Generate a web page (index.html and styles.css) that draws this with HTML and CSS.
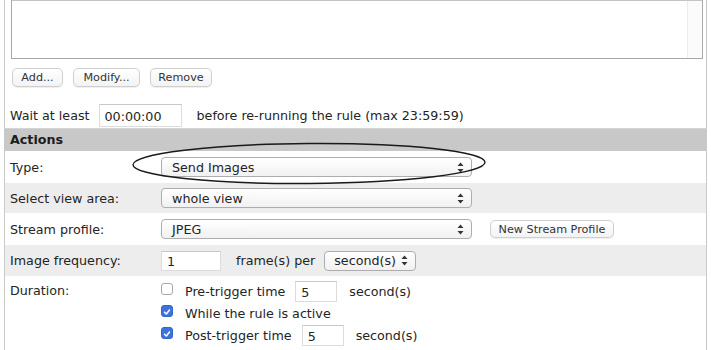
FILE: index.html
```html
<!DOCTYPE html>
<html lang="en">
<head>
    <meta charset="UTF-8">
    <meta name="viewport" content="width=device-width, initial-scale=1.0">
    <title>Action Rule</title>
    <link rel="stylesheet" href="styles.css">
</head>
<body>
    <div class="page">
        <div class="conditions">
            <div class="listbox"><div class="scroll"></div></div>
            <div class="list-buttons">
                <button class="btn btn-add">Add...</button>
                <button class="btn btn-modify">Modify...</button>
                <button class="btn btn-remove">Remove</button>
            </div>
            <div class="wait">
                <span>Wait at least</span>
                <input type="text" class="field field-time" value="00:00:00">
                <span>before re-running the rule (max 23:59:59)</span>
            </div>
        </div>

        <div class="section-head">Actions</div>

        <div class="row row-type">
            <div class="label">Type:</div>
            <div class="control">
                <div class="select select-wide"><span>Send Images</span><svg class="arrows" width="7" height="11" viewBox="0 0 7 11"><path d="M3.5 0.5 L6.5 4 L0.5 4 Z M3.5 10.5 L6.5 7 L0.5 7 Z" fill="#333"/></svg></div>
            </div>
        </div>
        <div class="row row-alt row-area">
            <div class="label">Select view area:</div>
            <div class="control">
                <div class="select select-wide"><span>whole view</span><svg class="arrows" width="7" height="11" viewBox="0 0 7 11"><path d="M3.5 0.5 L6.5 4 L0.5 4 Z M3.5 10.5 L6.5 7 L0.5 7 Z" fill="#333"/></svg></div>
            </div>
        </div>
        <div class="row row-stream">
            <div class="label">Stream profile:</div>
            <div class="control">
                <div class="select select-wide"><span>JPEG</span><svg class="arrows" width="7" height="11" viewBox="0 0 7 11"><path d="M3.5 0.5 L6.5 4 L0.5 4 Z M3.5 10.5 L6.5 7 L0.5 7 Z" fill="#333"/></svg></div>
                <button class="btn btn-new">New Stream Profile</button>
            </div>
        </div>
        <div class="row row-alt row-freq">
            <div class="label">Image frequency:</div>
            <div class="control">
                <input type="text" class="field field-freq" value="1">
                <span class="per">frame(s) per</span>
                <div class="select select-unit"><span>second(s)</span><svg class="arrows" width="7" height="11" viewBox="0 0 7 11"><path d="M3.5 0.5 L6.5 4 L0.5 4 Z M3.5 10.5 L6.5 7 L0.5 7 Z" fill="#333"/></svg></div>
            </div>
        </div>
        <div class="row row-duration">
            <div class="label">Duration:</div>
            <div class="control stack">
                <div class="check-line">
                    <span class="check"></span>
                    <span class="check-text">Pre-trigger time</span>
                    <input type="text" class="field field-sec" value="5">
                    <span>second(s)</span>
                </div>
                <div class="check-line">
                    <span class="check checked"><svg width="12" height="12" viewBox="0 0 12 12"><path d="M3 6.2 L5.2 8.4 L9 3.6" fill="none" stroke="#fff" stroke-width="1.8" stroke-linecap="round" stroke-linejoin="round"/></svg></span>
                    <span class="check-text">While the rule is active</span>
                </div>
                <div class="check-line">
                    <span class="check checked"><svg width="12" height="12" viewBox="0 0 12 12"><path d="M3 6.2 L5.2 8.4 L9 3.6" fill="none" stroke="#fff" stroke-width="1.8" stroke-linecap="round" stroke-linejoin="round"/></svg></span>
                    <span class="check-text">Post-trigger time</span>
                    <input type="text" class="field field-sec" value="5">
                    <span>second(s)</span>
                </div>
            </div>
        </div>
    </div>

    <!-- hand-drawn ring around the Type select -->
    <svg class="ring" width="711" height="350" viewBox="0 0 711 350">
        <ellipse cx="309" cy="163.5" rx="176" ry="20" fill="none" stroke="#1a1a1a" stroke-width="1.4" transform="rotate(-0.4 309 163.5)"/>
    </svg>
</body>
</html>
```

FILE: styles.css
```css
body {
    margin: 0;
    background-color: #ffffff;
    font-family: "DejaVu Sans", Verdana, sans-serif;
    font-size: 12.7px;
    color: #242424;
    position: relative;
    height: 350px;
    overflow: hidden;
}

.page {
    margin-left: 4px;
    width: 701px;
    border-left: 1px solid #c9c9c9;
    border-right: 1px solid #c9c9c9;
    height: 350px;
}

.conditions {
    border-bottom: 1px solid #d4d4d4;
    padding-left: 6px;
    height: 128px;
}

.listbox {
    width: 690px;
    height: 57px;
    border: 1px solid #a8a8a8;
    border-top-color: #c4c4c4;
    background-color: #ffffff;
    display: flex;
    justify-content: flex-end;
}

.scroll {
    width: 14px;
    border-left: 1px solid #ececec;
    background-color: #fbfbfb;
}

.list-buttons {
    display: flex;
    gap: 10px;
    margin-top: 9px;
    padding-left: 1px;
}

.btn {
    font-family: "DejaVu Sans", Verdana, sans-serif;
    font-size: 11.2px;
    color: #333333;
    height: 19px;
    padding: 0;
    border: 1px solid #cfcfcf;
    border-radius: 5px;
    background: linear-gradient(#ffffff, #f3f3f3);
    box-shadow: 0 1px 0 rgba(0, 0, 0, 0.06);
}

.btn-add { width: 51px; }
.btn-modify { width: 67px; }
.btn-remove { width: 62px; }

.wait {
    display: flex;
    align-items: center;
    margin-top: 17px;
    margin-left: -1px;
    height: 23px;
}

.field {
    font-family: "DejaVu Sans", Verdana, sans-serif;
    font-size: 12.7px;
    color: #242424;
    height: 21px;
    box-sizing: border-box;
    border: 1px solid #dcdcdc;
    border-top-color: #c8c8c8;
    background-color: #ffffff;
    padding: 2px 5px 0;
    outline: none;
}

.field-time {
    width: 83px;
    height: 23px;
    margin: 0 15px 0 9px;
}

.section-head {
    background-color: #c8c8c8;
    font-weight: bold;
    height: 22px;
    line-height: 22px;
    padding-left: 5px;
    color: #1c1c1c;
}

.row {
    display: grid;
    grid-template-columns: 151px 1fr;
    align-items: center;
    padding-left: 5px;
    height: 31px;
}

.row-alt {
    background-color: #ededed;
}

.row-type { height: 32px; }
.row-area { height: 30px; }
.row-stream { height: 32px; }
.row-freq { height: 31px; }

.control {
    display: flex;
    align-items: center;
}

.select {
    display: flex;
    align-items: center;
    justify-content: space-between;
    box-sizing: border-box;
    height: 20px;
    border: 1px solid #adadad;
    border-radius: 4px;
    background: linear-gradient(#ffffff, #f1f1f1);
    padding: 0 7px 0 10px;
}

.select-wide { width: 311px; }

.select-unit {
    width: 92px;
    padding-left: 9px;
}

.btn-new {
    margin-left: 18px;
    width: 124px;
    height: 18px;
}

.field-freq {
    width: 60px;
    height: 20px;
}

.per {
    margin: 0 9px 0 15px;
}

.row-duration {
    height: auto;
    align-items: start;
    padding-top: 4px;
}

.row-duration .label {
    padding-top: 3px;
}

.stack {
    flex-direction: column;
    align-items: flex-start;
    gap: 0;
}

.check-line {
    display: flex;
    align-items: center;
    height: 22px;
}

.check {
    width: 12px;
    height: 12px;
    box-sizing: border-box;
    border: 1px solid #a7a7a7;
    border-radius: 3px;
    background-color: #ffffff;
    margin-right: 12px;
    margin-top: -4px;
    display: flex;
}

.check.checked {
    background-color: #3d72e0;
    border-color: #3566cc;
}

.field-sec {
    width: 42px;
    height: 21px;
    margin: 0 12px 0 10px;
}

.ring {
    position: absolute;
    left: 0;
    top: 0;
    pointer-events: none;
}
```
